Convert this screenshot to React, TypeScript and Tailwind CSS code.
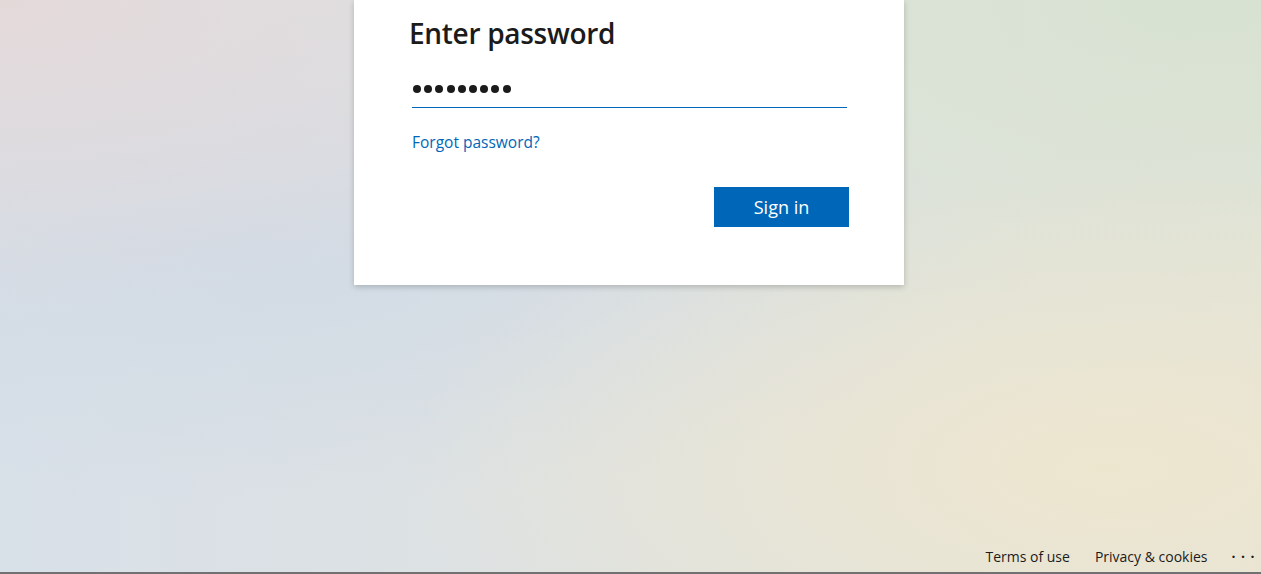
const bodyFont = "font-['Open_Sans','Noto_Sans',sans-serif]";

function PasswordDots({ count }: { count: number }) {
  return (
    <span className="flex items-center gap-[3.2px] pl-[1px]" aria-label="password">
      {Array.from({ length: count }).map((_, i) => (
        <span key={i} className="block h-[8px] w-[8px] rounded-full bg-[#1b1b1b]" />
      ))}
    </span>
  );
}

export default function App() {
  return (
    <div
      className={`flex h-[574px] w-full flex-col overflow-hidden border-b-2 border-b-[#717171] ${bodyFont} bg-[radial-gradient(ellipse_at_88%_82%,#ede6cf,transparent_45%),radial-gradient(ellipse_at_95%_0%,#d7e2d2,transparent_50%),radial-gradient(ellipse_at_0%_0%,#e4d9d9,transparent_40%),radial-gradient(ellipse_at_20%_45%,#d1dbe5,transparent_55%),linear-gradient(90deg,#d8e0e8,#e5e4da)]`}
    >
      {/* Card */}
      <div className="ml-[354px] w-[550px] bg-white pt-[16px] pr-[55px] pb-[58px] pl-[58px] shadow-[0_2px_6px_rgba(0,0,0,0.2)]">
        <h1 className="-ml-[3px] text-[28px] leading-[34px] font-semibold tracking-[-0.3px] text-[#1b1b1b]">
          Enter password
        </h1>

        {/* Password field */}
        <div className="mt-[22px] mr-[2px]">
          <div className="flex h-[35px] items-center pb-[1px]">
            <PasswordDots count={9} />
          </div>
          <div className="h-px bg-[#0067b8]" />
        </div>

        <div className="mt-[22px] h-5">
          <a className="text-[15.5px] leading-5 text-[#0067b8]" href="#">
            Forgot password?
          </a>
        </div>

        <div className="mt-[37px] flex justify-end">
          <button className="h-10 w-[135px] bg-[#0067b8] text-[18px] text-white">Sign in</button>
        </div>
      </div>

      <div className="flex-1" />

      {/* Footer */}
      <div className="flex h-[32px] items-center justify-end pr-[1px] text-[14px] text-[#1b1b1b]">
        <a href="#" className="mr-[25px]">Terms of use</a>
        <a href="#" className="mr-[24px]">Privacy &amp; cookies</a>
        <span className="mb-[7px] text-[14px] leading-none font-bold tracking-[5.5px]">...</span>
      </div>
    </div>
  );
}
